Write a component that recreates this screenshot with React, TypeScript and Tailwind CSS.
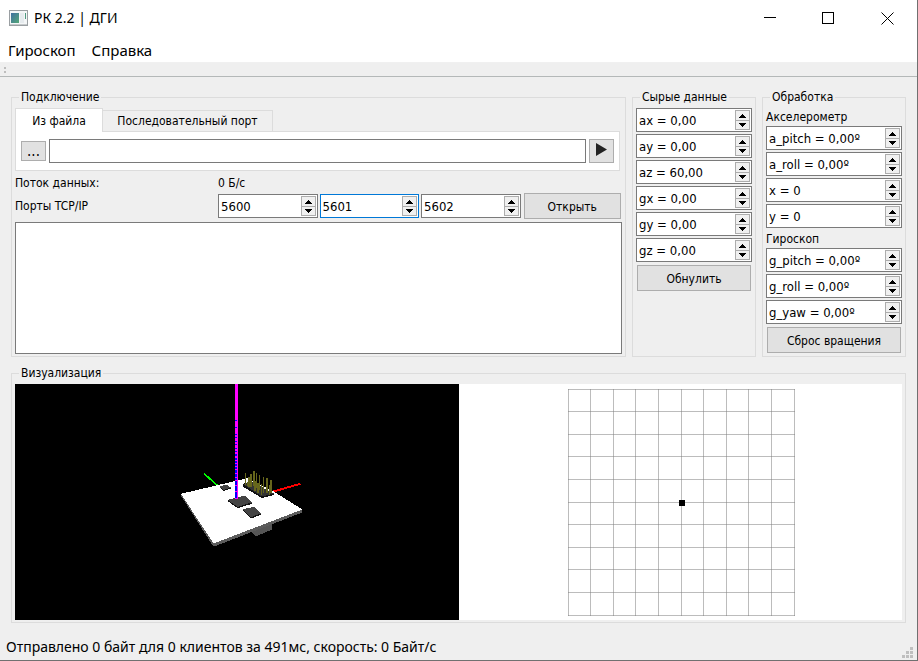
import type { ReactNode } from "react";

const uiFont = "font-['Noto_Sans','Segoe_UI',sans-serif]";
const formFont = "font-['DejaVu_Sans_Condensed',Tahoma,sans-serif]";

function Group({ title, className = "", children }: { title: string; className?: string; children: ReactNode }) {
  return (
    <fieldset className={`flex min-w-0 flex-col border border-[#dcdcdc] px-[3px] pb-0.5 ${className}`}>
      <legend className="ml-1 h-4 px-0.5 leading-4">{title}</legend>
      {children}
    </fieldset>
  );
}

function Arrow({ up = false }: { up?: boolean }) {
  return (
    <svg width="7" height="4" viewBox="0 0 7 4" shapeRendering="crispEdges" aria-hidden="true">
      {up ? (
        <path d="M3 0h1v1h1v1h1v1h1v1H0V3h1V2h1V1h1z" />
      ) : (
        <path d="M0 0h7v1H6v1H5v1H4v1H3V3H2V2H1V1H0z" />
      )}
    </svg>
  );
}

function Spin({ label, value, active = false }: { label: string; value: string; active?: boolean }) {
  return (
    <div className={`flex h-6 min-w-0 border bg-white p-px text-[13px] ${active ? "border-[#0078d7]" : "border-[#7a7a7a]"}`}>
      <input aria-label={label} defaultValue={value} className="w-0 min-w-0 flex-1 bg-transparent pt-px pl-px outline-none" />
      <div className="flex w-[15px] flex-col">
        <button aria-label={`${label}: больше`} className="flex h-[11px] items-center justify-center border border-[#adadad] bg-[#f0f0f0]">
          <Arrow up />
        </button>
        <button aria-label={`${label}: меньше`} className="-mt-px flex h-[10px] items-center justify-center border border-[#adadad] bg-[#f0f0f0]">
          <Arrow />
        </button>
      </div>
    </div>
  );
}

function PushButton({ children }: { children: ReactNode }) {
  return <button className="mx-px h-[26px] border border-[#adadad] bg-[#e1e1e1] pt-px">{children}</button>;
}

function AppIcon() {
  return (
    <svg width="19" height="16" viewBox="0 0 19 16" aria-hidden="true">
      <defs>
        <linearGradient id="screen" x1="0" y1="0" x2="1" y2="1">
          <stop offset="0" stopColor="#3f6fa0" />
          <stop offset="1" stopColor="#55a878" />
        </linearGradient>
      </defs>
      <rect x="0.5" y="0.5" width="18" height="15" fill="#f4f6f7" stroke="#9a9fa2" />
      <rect x="1" y="14" width="17" height="1" fill="#c5c9cb" />
      <rect x="2" y="3" width="8" height="10" fill="url(#screen)" />
      <rect x="11" y="3" width="4" height="10" fill="#e6ebee" />
      <rect x="16" y="3" width="1" height="6" fill="#4f9a80" />
    </svg>
  );
}

const pins = [
  [256, 280, 316], [266, 290, 320], [272, 281, 322], [281, 274, 318], [289, 278, 324],
  [285, 304, 334], [298, 284, 330], [294, 308, 340], [310, 290, 338], [320, 295, 340],
  [304, 312, 344], [332, 300, 338], [328, 316, 344], [262, 306, 318],
];

/* Blue stripes where the two coplanar axis faces overlap: [top, height]. */
const stripes = [
  [120, 3], [141, 3], [162, 3], [171, 3], [183, 3], [192, 3], [204, 3], [213, 3], [222, 6],
  [234, 6], [243, 6], [252, 6], [261, 6], [270, 9], [282, 9], [294, 6], [303, 12], [318, 15], [336, 18],
];

function BoardView() {
  return (
    <svg viewBox="15 384 443 236" className="h-full min-h-[236px] w-full bg-black" shapeRendering="crispEdges" role="img" aria-label="Модель платы">
      <g transform="translate(160 380) scale(0.33333)">
        <path d="M132 281 176 320" stroke="#00ff00" strokeWidth="5" />
        <path d="M272 455 284 467 292 466 334 449 337 430Z" fill="#555" />
        <path d="M62 341 160 490 426 387V397L162 499 156 494 62 346Z" fill="#5c5c5c" />
        <path d="M62 341 262 294 340 334 426 388 160 490Z" fill="#fff" />
        <path d="M177 320 200 313 212 323V326L190 332Z" fill="#111" />
        <path d="M177 320 200 313 212 323 190 329Z" fill="#444" />
        <path d="M247 312 272 304 341 340V345L305 354 247 319Z" fill="#111" />
        <path d="M249 312 272 304 341 340 305 349Z" fill="#333" />
        <path d="M202 359 254 346 275 367V371L232 384 202 363Z" fill="#111" />
        <path d="M202 359 254 346 275 367 232 380Z" fill="#444" />
        <path d="M248 387 281 380 302 400V404L272 415 248 392Z" fill="#111" />
        <path d="M248 387 281 380 302 400 272 411Z" fill="#444" />
        {pins.map(([x, top, bottom]) => (
          <path key={x} d={`M${x} ${top}V${bottom}`} stroke="#66661c" strokeWidth="5" />
        ))}
        <path d="M340 334 420 311" stroke="#ff0000" strokeWidth="6" />
        <rect x="225" y="12" width="9" height="345" fill="#ff00ff" />
        {stripes.map(([y, height]) => (
          <rect key={y} x="225" y={y} width="6" height={height} fill="#0000ff" />
        ))}
      </g>
    </svg>
  );
}

const gridLines = [0, 22, 45, 67, 90, 113, 135, 158, 180, 203, 226];

function LevelView() {
  return (
    <svg width="227" height="227" viewBox="0 0 227 227" shapeRendering="crispEdges" role="img" aria-label="Отклонение">
      {gridLines.map((p) => (
        <g key={p} fill="#808080" fillOpacity="0.53">
          <rect x={p} y="0" width="1" height="227" />
          <rect x="0" y={p} width="227" height="1" />
        </g>
      ))}
      <rect x="111" y="111" width="6" height="6" />
    </svg>
  );
}

const raw = [
  ["ax", "0,00"],
  ["ay", "0,00"],
  ["az", "60,00"],
  ["gx", "0,00"],
  ["gy", "0,00"],
  ["gz", "0,00"],
];
const accel = [
  ["a_pitch", "0,00º"],
  ["a_roll", "0,00º"],
  ["x", "0"],
  ["y", "0"],
];
const gyro = [
  ["g_pitch", "0,00º"],
  ["g_roll", "0,00º"],
  ["g_yaw", "0,00º"],
];

export default function App() {
  return (
    <div className={`flex min-h-screen flex-col border-r border-b border-[#707070] bg-[#efefef] text-black ${uiFont} text-[15px]`}>
      <header className="flex h-9 items-center bg-white pl-[9px]">
        <AppIcon />
        <h1 className="ml-1.5 flex-1 text-sm">РК 2.2 | ДГИ</h1>
        <button aria-label="Свернуть" className="flex h-full w-[58px] items-center justify-center">
          <svg width="12" height="12" shapeRendering="crispEdges"><path d="M0 5h12v1H0z" /></svg>
        </button>
        <button aria-label="Развернуть" className="flex h-full w-[58px] items-center justify-center">
          <svg width="12" height="12"><rect x="0.5" y="0.5" width="11" height="11" fill="none" stroke="#000" /></svg>
        </button>
        <button aria-label="Закрыть" className="flex h-full w-[60px] items-center justify-center">
          <svg width="13" height="13"><path d="M0.5 0.5 12.5 12.5M12.5 0.5 0.5 12.5" stroke="#000" /></svg>
        </button>
      </header>
      <nav className="flex h-[27px] gap-4 border-b border-[#f0f0f0] bg-white pl-2 leading-[28px]">
        <button>Гироскоп</button>
        <button>Справка</button>
      </nav>
      <div className="flex h-[14px] flex-col justify-center gap-0.5 border-b border-[#b4b8b8] pl-1">
        <span className="size-0.5 bg-[#bdbdbd]" />
        <span className="size-0.5 bg-[#bdbdbd]" />
      </div>

      <main className={`flex flex-1 flex-col gap-2 px-[11px] pt-3 ${formFont} text-xs`}>
        <div className="flex gap-1.5">
          <Group title="Подключение" className="flex-1">
            <div className="flex flex-1 flex-col pt-[3px]">
              <div role="tablist" className="flex items-end">
                <button role="tab" aria-selected="true" className="z-10 -mb-px h-6 w-[88px] border border-b-0 border-[#dcdcdc] bg-white">
                  Из файла
                </button>
                <button role="tab" aria-selected="false" className="-ml-px h-[21px] w-[171px] border border-b-0 border-[#dcdcdc]">
                  Последовательный порт
                </button>
              </div>
              <div className="mr-0.5 flex h-10 items-center gap-[3px] border border-[#dcdcdc] bg-white px-[5px]">
                <button className="h-5 w-[25px] border border-[#adadad] bg-[#e1e1e1] text-[15px] leading-4">...</button>
                <input aria-label="Файл" className="h-6 min-w-0 flex-1 border border-[#7a7a7a] bg-white px-1 outline-none" />
                <button aria-label="Пуск" className="flex h-6 w-[25px] items-center justify-center border border-[#adadad] bg-[#e1e1e1] pb-[3px]">
                  <svg width="11" height="13" viewBox="0 0 11 13"><path d="M0 0 11 6.500 0 13Z" fill="#222" /></svg>
                </button>
              </div>
              <div className="grid grid-cols-[201px_1fr_1fr_1fr_1fr] items-center gap-x-0.5">
                <span className="flex h-[22px] items-end pb-0.5">Поток данных:</span>
                <output className="col-span-4 flex h-[22px] items-end pb-0.5">0 Б/с</output>
                <span>Порты TCP/IP</span>
                <Spin label="Порт 1" value="5600" />
                <Spin label="Порт 2" value="5601" active />
                <Spin label="Порт 3" value="5602" />
                <PushButton>Открыть</PushButton>
              </div>
              <textarea aria-label="Журнал" className="mt-[3px] min-h-[132px] flex-1 resize-none border border-[#7a7a7a] bg-white p-1 outline-none" />
            </div>
          </Group>

          <Group title="Сырые данные" className="w-[124px]">
            <div className="flex flex-col gap-0.5 pt-[3px]">
              {raw.map(([name, value]) => (
                <Spin key={name} label={name} value={`${name} = ${value}`} />
              ))}
              <div className="grid pt-px">
                <PushButton>Обнулить</PushButton>
              </div>
            </div>
          </Group>

          <Group title="Обработка" className="w-[144px]">
            <div className="flex flex-col gap-0.5 pt-[3px]">
              <span className="h-4 leading-[18px]">Акселерометр</span>
              {accel.map(([name, value]) => (
                <Spin key={name} label={name} value={`${name} = ${value}`} />
              ))}
              <span className="h-4 leading-[18px]">Гироскоп</span>
              {gyro.map(([name, value]) => (
                <Spin key={name} label={name} value={`${name} = ${value}`} />
              ))}
              <div className="grid pt-px">
                <PushButton>Сброс вращения</PushButton>
              </div>
            </div>
          </Group>
        </div>

        <Group title="Визуализация" className="flex-1">
          <div className="grid flex-1 grid-cols-2 pt-[3px]">
            <BoardView />
            <div className="flex items-center justify-center bg-white pl-0.5">
              <LevelView />
            </div>
          </div>
        </Group>
      </main>

      <footer className="flex h-[37px] items-center justify-between pt-3 pr-1 pb-0.5 pl-1.5 text-sm">
        <span>Отправлено 0 байт для 0 клиентов за 491мс, скорость: 0 Байт/с</span>
        <svg width="11" height="11" viewBox="0 0 11 11" fill="#bfbfbf" shapeRendering="crispEdges" className="self-end" aria-hidden="true">
          <path d="M8 0h3v3H8zM8 4h3v3H8zM8 8h3v3H8zM4 4h3v3H4zM4 8h3v3H4zM0 8h3v3H0z" />
        </svg>
      </footer>
    </div>
  );
}
